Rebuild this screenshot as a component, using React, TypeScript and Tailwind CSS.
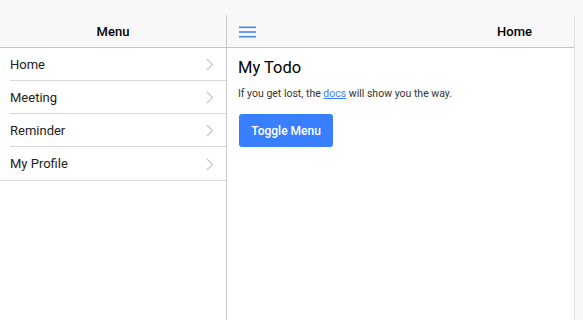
import React from "react";

const items = ["Home", "Meeting", "Reminder", "My Profile"];

function Chevron() {
  return (
    <svg width="8" height="13" viewBox="0 0 8 13" fill="none">
      <path d="M1 1l5.5 5.5L1 12" stroke="#c5c5c7" strokeWidth="1.2" />
    </svg>
  );
}

export default function App() {
  return (
    <div
      className="w-[583px] h-[320px] bg-[#f8f8f8] pt-[15px] flex overflow-hidden"
      style={{ fontFamily: "Roboto, 'Noto Sans', sans-serif" }}
    >
      <div className="w-[575px] h-full flex bg-white border-r border-[#e2e2e2]">
        <div className="w-[227px] h-full flex flex-col border-r border-[#c8c8c8]">
          <div className="h-[33px] shrink-0 bg-[#f8f8f8] border-b border-[#c4c4c4] flex items-center justify-center pt-[1px] text-[13px] font-medium text-black">
            Menu
          </div>
          {items.map((it, i) => (
            <div
              key={it}
              className={
                i === items.length - 1
                  ? "h-[34px] border-b border-[#d8d8d8] flex"
                  : "h-[33px] pl-[10px] flex"
              }
            >
              <div
                className={
                  i === items.length - 1
                    ? "flex-1 pl-[10px] pr-[12px] pt-[1px] flex items-center justify-between"
                    : "flex-1 pr-[12px] pt-[1px] border-b border-[#d8d8d8] flex items-center justify-between"
                }
              >
                <span className="text-[13px] text-[#222]">{it}</span>
                <Chevron />
              </div>
            </div>
          ))}
        </div>
        <div className="flex-1 h-full flex flex-col">
          <div className="h-[33px] shrink-0 bg-[#f8f8f8] border-b border-[#c4c4c4] flex items-center justify-between pl-[12px] pr-[42px] pt-[1px]">
            <svg width="17" height="12" viewBox="0 0 17 12">
              <rect x="0" y="0.5" width="17" height="1.6" fill="#4a86e8" />
              <rect x="0" y="5.2" width="17" height="1.6" fill="#4a86e8" />
              <rect x="0" y="9.9" width="17" height="1.6" fill="#4a86e8" />
            </svg>
            <span className="text-[13px] font-medium text-black">Home</span>
          </div>
          <div className="px-[11px] pt-[10px]">
            <h1 className="text-[16.5px] leading-[20px] text-black">My Todo</h1>
            <p className="mt-[9px] text-[10.5px] leading-[14px] text-[#333]">
              If you get lost, the{" "}
              <a className="text-[#3880ff] underline" href="#">
                docs
              </a>{" "}
              will show you the way.
            </p>
            <button className="mt-[13px] ml-[1px] h-[33px] w-[94px] rounded-[3px] bg-[#3880ff] text-white text-[12px] font-medium">
              Toggle Menu
            </button>
          </div>
        </div>
      </div>
    </div>
  );
}
